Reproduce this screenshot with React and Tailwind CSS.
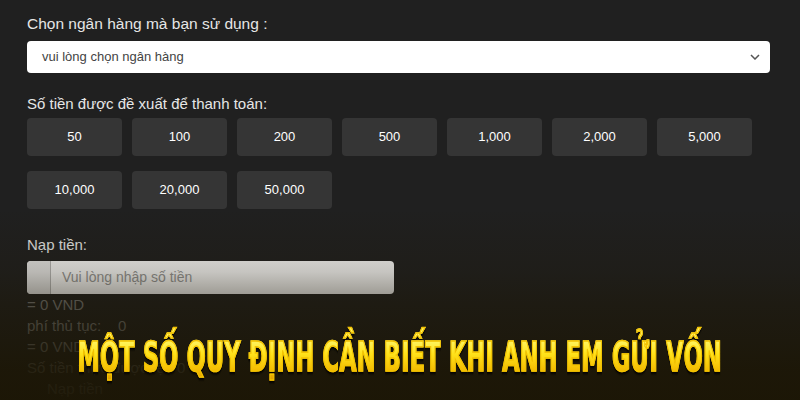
const amounts = [
  ["50", "100", "200", "500", "1,000", "2,000", "5,000"],
  ["10,000", "20,000", "50,000"],
];

const AmountButton = ({ value }) => (
  <button className="w-[95px] h-[38px] rounded-[4px] bg-[#353535] text-white text-[13px]">
    {value}
  </button>
);

const App = () => {
  return (
    <div
      className="relative w-[800px] h-[400px] overflow-hidden bg-[#202020] text-[#e6e6e6]"
      style={{ fontFamily: "'Liberation Sans', Arial, sans-serif" }}
    >
      <div className="pl-[27px] pr-[30px] pt-[14px]">
        <div className="text-[15.5px] leading-5">Chọn ngân hàng mà bạn sử dụng :</div>
        <div className="mt-[7px] h-[32px] w-[743px] rounded-[4px] bg-white flex items-center justify-between pl-[15px] pr-[10px]">
          <span className="text-[13px] text-[#444]">vui lòng chọn ngân hàng</span>
          <svg width="10" height="6" viewBox="0 0 10 6" fill="none">
            <path d="M1 1l4 4 4-4" stroke="#555" strokeWidth="1.5" />
          </svg>
        </div>

        <div className="mt-[21px] text-[15px] leading-5">Số tiền được đề xuất để thanh toán:</div>
        <div className="mt-[4px] flex flex-col gap-[15px]">
          {amounts.map((row, i) => (
            <div key={i} className="flex gap-[10px]">
              {row.map((v) => (
                <AmountButton key={v} value={v} />
              ))}
            </div>
          ))}
        </div>

        <div className="mt-[26px] text-[15px] leading-5">Nạp tiền:</div>
        <div className="mt-[6px] h-[33px] w-[367px] rounded-[4px] bg-white flex overflow-hidden">
          <div className="w-[24px] bg-[#eeeeee] border-r border-[#bbb]" />
          <span className="pl-[11px] self-center text-[14px] text-[#999]">Vui lòng nhập số tiền</span>
        </div>
        <div className="text-[15px] leading-[21px] text-[#858585]">
          <div>= 0 VND</div>
          <div>
            phí thủ tục:&nbsp;&nbsp;&nbsp;&nbsp;0
          </div>
          <div>= 0 VND</div>
          <div>Số tiền thực được tệ:&nbsp;&nbsp;0</div>
          <div className="pl-[20px]">Nạp tiền</div>
        </div>
      </div>

      {/* fade + headline overlay */}
      <div className="absolute inset-0 pointer-events-none bg-[linear-gradient(to_bottom,rgba(28,22,5,0)_52%,rgba(28,22,5,0.25)_68%,rgba(28,22,5,0.5)_76%,rgba(28,22,5,0.72)_86%,rgba(28,22,5,0.88)_92%,rgba(28,22,5,0.95)_100%)]" />
      <div className="absolute left-0 right-0 top-[327px] flex justify-center">
        <div
          className="py-[8px] text-[40px] leading-[44px] font-bold tracking-[0.5px] scale-x-[0.62] whitespace-nowrap bg-[linear-gradient(to_bottom,#fff76a_20%,#ffe21a_45%,#f2b800_75%,#d99200_92%)] bg-clip-text text-transparent [-webkit-text-stroke:1.5px_#f3c200] drop-shadow-[0_2px_1px_rgba(0,0,0,0.85)]"
          style={{ fontFamily: "'Liberation Sans Narrow', 'DejaVu Sans Condensed', 'Liberation Sans', sans-serif" }}
        >
          MỘT SỐ QUY ĐỊNH CẦN BIẾT KHI ANH EM GỬI VỐN
        </div>
      </div>
    </div>
  );
};

export default App;
